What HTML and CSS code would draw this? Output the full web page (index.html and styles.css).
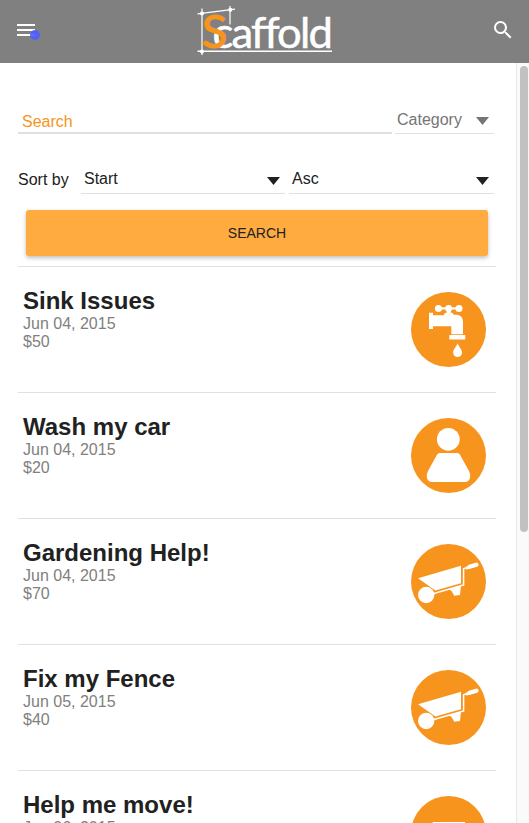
FILE: index.html
```html
<!DOCTYPE html>
<html lang="en">
<head>
<meta charset="utf-8">
<title>Scaffold</title>
<link rel="stylesheet" href="styles.css">
</head>
<body>
<svg class="defs" width="0" height="0">
  <symbol id="faucet" viewBox="0 0 75 75">
    <circle cx="27.4" cy="16.4" r="3.5"/><circle cx="37.7" cy="16.4" r="3.4"/><circle cx="48" cy="16.4" r="3.5"/>
    <path d="M28 15.2h20v2.4H28zM35.7 18h4v4h-4z"/>
    <path d="M18 20.7h4v2.6h10.5l1.8-2.6h7l1.5 2H46q6 1 6 7.3v12.3H40.3v-8H22V37h-4zM38.3 43h16v4.6h-16z"/>
    <path d="M46.6 51.3c1 3.2 4.5 6.2 4.5 9.3a4.5 4.3 0 0 1-9 0c0-3.1 3.5-6.1 4.5-9.3z"/>
  </symbol>
  <symbol id="person" viewBox="0 0 75 75">
    <circle cx="37.3" cy="21.3" r="11.4"/>
    <path d="M28.5 35h18q1.500 0 2.500 1.800l9 16.200c2.500 5 1.200 11-4 11H21c-5.200 0-6.500-6-4-11l9-16.200Q27 35 28.500 35z"/>
  </symbol>
  <symbol id="barrow" viewBox="0 0 75 75">
    <path d="M7 34.300 50 21.700v17.500l-25.600 7.300z"/>
    <path d="M22 49.800 52.600 41V24.700l5-1.800" fill="none" stroke="#fff" stroke-width="1.500"/>
    <path d="M55 24.300 64.500 20.700" stroke="#fff" stroke-width="3"/>
    <path d="M58.500 22.800 65.500 20.700" stroke="#fff" stroke-width="4.200" stroke-linecap="round"/>
    <circle cx="15.200" cy="51" r="8.200"/>
    <path d="M38 45 50 41.500 49 51l-5.700.7-2.600-4.500z"/>
  </symbol>
  <symbol id="box" viewBox="0 0 75 75"><path d="M21.700 26H54v24H21.700z"/></symbol>
</svg>

<header class="toolbar">
  <button class="menu" aria-label="Menu">
    <svg width="18" height="12"><path d="M0 0h18v2H0zM0 5h18v2H0zM0 10h18v2H0z" fill="#fff"/></svg>
    <span class="dot"></span>
  </button>
  <svg class="logo" width="145" height="63" viewBox="190 0 145 63">
    <g stroke="#fff" fill="none">
      <path d="M202 8.500V55M197.500 13.900 235 9.200M230 6v18.500" stroke-width="1.200"/>
      <path d="M197.500 51.300H332" stroke-width="1.500"/>
    </g>
    <g fill="#fff"><circle cx="202" cy="13.500" r="2.100"/><circle cx="230.300" cy="9.800" r="2.100"/><circle cx="202" cy="51.500" r="2.100"/></g>
    <text class="logo-word" x="212.500" y="47.700" textLength="118.500" lengthAdjust="spacingAndGlyphs">caffold</text>
    <text class="logo-s" x="201.500" y="48.300" textLength="26" lengthAdjust="spacingAndGlyphs">S</text>
  </svg>
  <button class="find" aria-label="Search">
    <svg width="24" height="24" viewBox="0 0 24 24"><path fill="#fff" d="M15.500 14h-.79l-.28-.27A6.471 6.471 0 0 0 16 9.500 6.500 6.500 0 1 0 9.500 16c1.610 0 3.090-.59 4.230-1.570l.27.28v.79l5 4.990L20.490 19l-4.990-5zm-6 0C7.010 14 5 11.990 5 9.500S7.010 5 9.500 5 14 7.010 14 9.500 11.990 14 9.500 14z"/></svg>
  </button>
</header>

<div class="view">
  <main class="content">
    <form class="filters">
      <div class="line">
        <div class="query"><span>Search</span></div>
        <div class="select category"><span>Category</span><i class="arrow"></i></div>
      </div>
      <div class="line sort">
        <span class="sort-label">Sort by</span>
        <div class="select start"><span>Start</span><i class="arrow"></i></div>
        <div class="select order"><span>Asc</span><i class="arrow"></i></div>
      </div>
      <button type="button" class="submit">SEARCH</button>
    </form>
    <section class="tasks">
      <article class="task"><div><h3>Sink Issues</h3><p>Jun 04, 2015</p><p>$50</p></div><svg class="badge"><use href="#faucet"/></svg></article>
      <article class="task"><div><h3>Wash my car</h3><p>Jun 04, 2015</p><p>$20</p></div><svg class="badge"><use href="#person"/></svg></article>
      <article class="task"><div><h3>Gardening Help!</h3><p>Jun 04, 2015</p><p>$70</p></div><svg class="badge"><use href="#barrow"/></svg></article>
      <article class="task"><div><h3>Fix my Fence</h3><p>Jun 05, 2015</p><p>$40</p></div><svg class="badge"><use href="#barrow"/></svg></article>
      <article class="task"><div><h3>Help me move!</h3><p>Jun 06, 2015</p></div><svg class="badge"><use href="#box"/></svg></article>
    </section>
  </main>
  <div class="scrollbar"><div class="thumb"></div></div>
</div>
</body>
</html>
```
FILE: styles.css
```css
* { box-sizing: border-box; }
body {
  margin: 0;
  height: 823px;
  overflow: hidden;
  display: flex;
  flex-direction: column;
  background: #fff;
  color: #212121;
  font: 16px/18px "Liberation Sans", Arial, sans-serif;
}
h3, p { margin: 0; }
button { border: 0; padding: 0; background: none; font: inherit; }
.defs { position: absolute; }

.toolbar {
  flex: none;
  height: 63px;
  display: flex;
  justify-content: space-between;
  background: #808080;
}
.menu {
  position: relative;
  width: 61px;
  margin-right: 129px;
  padding: 24px 0 0 17px;
  display: flex;
  align-items: flex-start;
}
.dot {
  position: absolute;
  left: 30px;
  top: 30px;
  width: 10px;
  height: 10px;
  border-radius: 50%;
  background: rgba(77, 94, 255, .9);
}
.logo { flex: none; }
.logo-word { font: 43px Lato, sans-serif; letter-spacing: -1.8px; fill: #fff; stroke: #fff; stroke-width: .5px; }
.logo-s { font: 47px Lato, sans-serif; fill: #f7941e; stroke: #f7941e; stroke-width: .9px; }
.find { width: 38px; padding: 0 12px 3px 0; display: flex; align-items: center; margin-left: auto; }
.find svg { flex: none; }

.view { flex: 1; min-height: 0; display: flex; }
.content { flex: 1; overflow: hidden; padding: 40px 20px 0 18px; }
.scrollbar { width: 13px; padding: 3px 1px 0 3px; background: #fafafa; border-left: 1px solid #e8e8e8; }
.thumb { height: 466px; width: 8px; border-radius: 4px; background: #c1c1c1; }

.filters { height: 163px; padding-right: 2px; }
.line { display: flex; }
.query {
  width: 374px;
  height: 31px;
  margin-right: 3px;
  padding: 10px 4px 0;
  color: #f7941e;
  border-bottom: 2px solid #e0e0e0;
}
.select {
  height: 31px;
  padding: 8px 5px 0 3px;
  display: flex;
  justify-content: space-between;
  border-bottom: 1px solid #e0e0e0;
}
.category { flex: 1; color: #757575; padding-left: 2px; }
.arrow {
  width: 13px;
  height: 8px;
  margin-top: 6px;
  background: currentColor;
  clip-path: polygon(0 0, 100% 0, 50% 100%);
}
.sort { margin-top: 29px; }
.sort-label { width: 63px; padding-top: 8px; }
.sort .select { padding-top: 7px; }
.sort .arrow { margin-top: 7px; }
.start { width: 204px; margin-right: 4px; }
.order { flex: 1; }
.submit {
  display: block;
  width: 462px;
  height: 46px;
  margin: 16px 0 0 8px;
  border-radius: 3px;
  background: #ffab40;
  box-shadow: 0 2px 4px rgba(0, 0, 0, .26);
  color: #212121;
  font-size: 14px;
}

.task {
  height: 126px;
  padding: 20px 10px 0 5px;
  display: flex;
  justify-content: space-between;
  border-top: 1px solid #e0e0e0;
}
.task h3 { font-size: 24px; line-height: 27px; margin-bottom: 1px; }
.task p { color: #808080; }
.badge { width: 75px; height: 75px; margin-top: 5px; border-radius: 50%; background: #f7941e; fill: #fff; }
```
